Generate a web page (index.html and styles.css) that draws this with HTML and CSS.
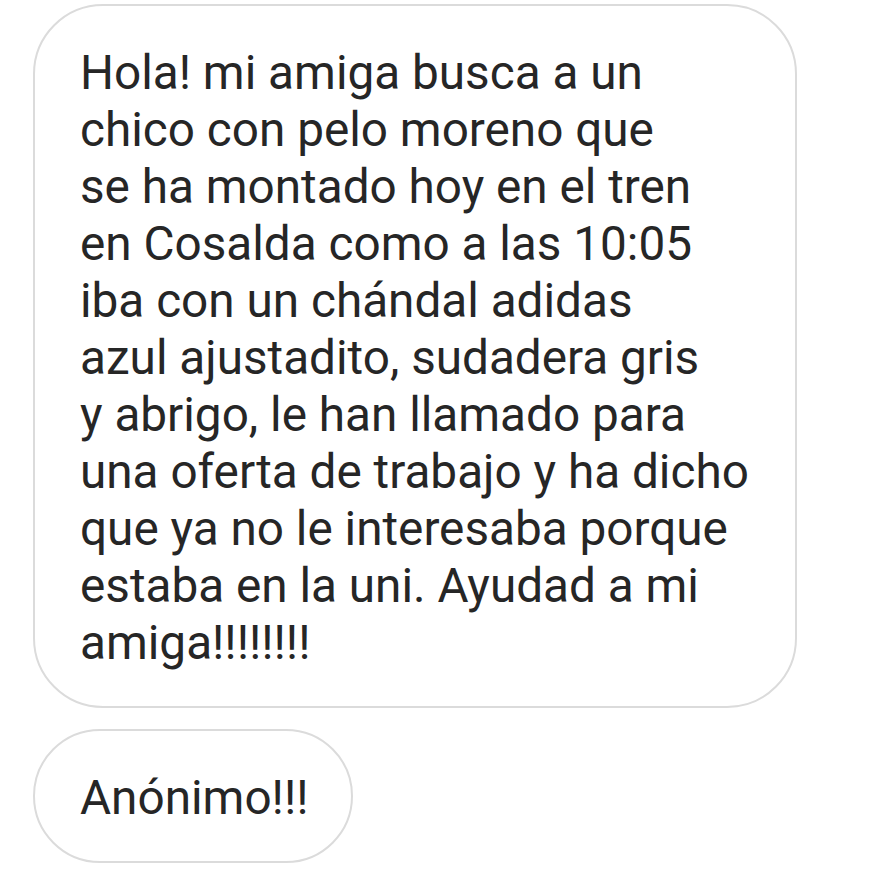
FILE: index.html
```html
<!DOCTYPE html>
<html lang="es">
<head>
<meta charset="utf-8">
<link rel="stylesheet" href="styles.css">
</head>
<body>
<div class="thread">
  <div class="bubble bubble-main">Hola! mi amiga busca a un<br>chico con pelo moreno que<br>se ha montado hoy en el tren<br>en Cosalda como a las 10:05<br>iba con un chándal adidas<br>azul ajustadito, sudadera gris<br>y abrigo, le han llamado para<br>una oferta de trabajo y ha dicho<br>que ya no le interesaba porque<br>estaba en la uni. Ayudad a mi<br>amiga!!!!!!!!</div>
  <div class="bubble bubble-small">Anónimo!!!</div>
</div>
</body>
</html>
```
FILE: styles.css
```css
html, body {
  margin: 0;
  background: #ffffff;
}
.thread {
  display: flex;
  flex-direction: column;
  align-items: flex-start;
  gap: 21px;
  padding: 4px 0 0 33px;
}
.bubble {
  box-sizing: border-box;
  border: 2px solid #dbdbdb;
  background: #ffffff;
  color: #262626;
  font-family: Roboto, "Noto Sans", sans-serif;
  font-size: 47.7px;
  line-height: 57px;
  padding: 39px 20px 34px 45px;
}
.bubble-main {
  width: 764px;
  border-radius: 70px;
}
.bubble-small {
  width: 320px;
  height: 134px;
  border-radius: 67px;
}
```
